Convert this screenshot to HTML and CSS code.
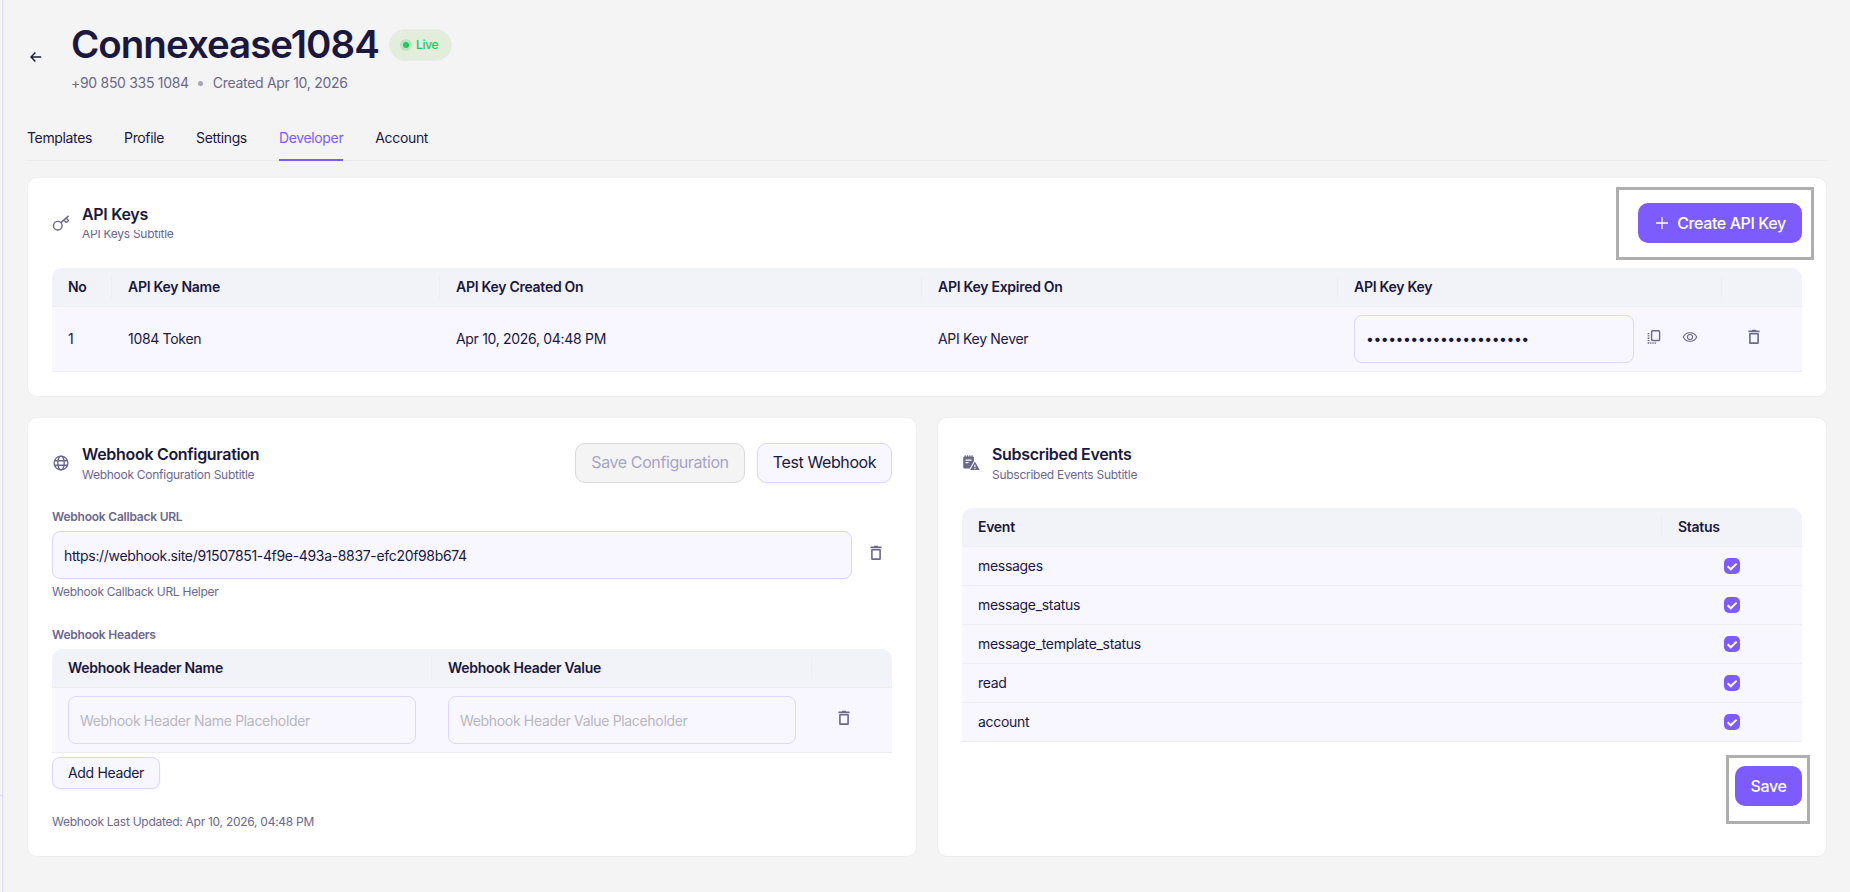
FILE: index.html
```html
<!DOCTYPE html>
<html lang="en">
<head>
    <meta charset="UTF-8">
    <meta name="viewport" content="width=device-width, initial-scale=1.0">
    <title>Connexease1084 - Developer</title>
    <link rel="stylesheet" href="styles.css">
</head>
<body>
    <svg class="sprite" aria-hidden="true">
        <symbol id="trash" viewBox="0 0 16 16">
            <path d="M2.5 2.4h11M6 1.5h4" stroke-width="1.6"/>
            <path d="M3.9 4.8h8.2v9.3H3.9z" stroke-width="1.6" stroke-linejoin="round"/>
        </symbol>
        <symbol id="check" viewBox="0 0 16 16">
            <path d="M3.6 8.2l3.2 3.1 5.8-5.7" stroke-width="2"/>
        </symbol>
    </svg>

    <aside class="sidebar"></aside>
    <main class="page">
        <header class="header">
            <a class="back" href="#" aria-label="Back">
                <svg width="12" height="12" viewBox="0 0 12 12"><path d="M11.2 6H1.2M5.4 1.4L1 6l4.4 4.6" stroke-width="1.4"/></svg>
            </a>
            <div>
                <div class="title-row">
                    <h1>Connexease1084</h1>
                    <span class="badge"><i class="badge-dot"></i>Live</span>
                </div>
                <div class="meta">
                    <span>+90 850 335 1084</span>
                    <i class="meta-dot"></i>
                    <span>Created Apr 10, 2026</span>
                </div>
            </div>
        </header>

        <nav class="tabs">
            <a href="#">Templates</a>
            <a href="#">Profile</a>
            <a href="#">Settings</a>
            <a href="#" class="active">Developer</a>
            <a href="#">Account</a>
        </nav>

        <div class="cards">
            <section class="card card-wide">
                <div class="card-head">
                    <svg class="card-icon" viewBox="0 0 18 18">
                        <circle cx="5.8" cy="11.7" r="4.3" stroke-width="1.4"/>
                        <path d="M8.9 8.6L16.6 1.9M12 6.1l1.9 2.1q2.2-.3 2.6-1.6l-2-2.4" stroke-width="1.4"/>
                    </svg>
                    <div class="card-title">
                        <h2>API Keys</h2>
                        <p class="cut">API Keys Subtitle</p>
                    </div>
                    <button class="btn primary marked marked-create">
                        <svg width="14" height="14" viewBox="0 0 14 14"><path d="M7 1v12M1 7h12" stroke-width="1.3"/></svg>
                        Create API Key
                    </button>
                </div>
                <table class="table">
                    <colgroup><col class="c-no"><col class="c-name"><col class="c-created"><col class="c-expired"><col class="c-key"><col class="c-action"></colgroup>
                    <thead>
                        <tr><th>No</th><th>API Key Name</th><th>API Key Created On</th><th>API Key Expired On</th><th>API Key Key</th><th></th></tr>
                    </thead>
                    <tbody>
                        <tr class="tall">
                            <td>1</td>
                            <td>1084 Token</td>
                            <td>Apr 10, 2026, 04:48 PM</td>
                            <td>API Key Never</td>
                            <td>
                                <div class="key-cell">
                                    <input class="input secret" type="text" value="••••••••••••••••••••••" readonly>
                                    <button class="icon-btn" aria-label="Copy">
                                        <svg width="16" height="16" viewBox="0 0 16 16"><rect x="5.6" y="1.7" width="8" height="9.8" rx="1" stroke-width="1.4"/><path d="M2.5 4v10H11" stroke-width="1.7" stroke-dasharray="1.3 1"/></svg>
                                    </button>
                                    <button class="icon-btn" aria-label="Show">
                                        <svg width="16" height="16" viewBox="0 0 16 16"><path d="M1.3 8C2.7 4.9 5.1 3.7 8 3.7S13.3 4.9 14.7 8C13.3 11.1 10.9 12.3 8 12.3S2.7 11.1 1.3 8z" stroke-width="1.1"/><circle cx="8" cy="8" r="2.5" stroke-width="1.1"/></svg>
                                    </button>
                                </div>
                            </td>
                            <td><button class="icon-btn" aria-label="Delete"><svg width="16" height="16"><use href="#trash"/></svg></button></td>
                        </tr>
                    </tbody>
                </table>
            </section>

            <section class="card">
                <div class="card-head">
                    <svg class="card-icon" viewBox="0 0 18 18">
                        <circle cx="9" cy="9" r="6.9" stroke-width="1.4"/>
                        <ellipse cx="9" cy="9" rx="3.2" ry="6.9" stroke-width="1.4"/>
                        <path d="M2.6 6.7h12.8M2.6 11.3h12.8" stroke-width="1.4"/>
                    </svg>
                    <div class="card-title">
                        <h2>Webhook Configuration</h2>
                        <p>Webhook Configuration Subtitle</p>
                    </div>
                    <button class="btn disabled" disabled>Save Configuration</button>
                    <button class="btn light">Test Webhook</button>
                </div>

                <label class="label" for="callback">Webhook Callback URL</label>
                <div class="callback">
                    <input class="input" id="callback" type="text" value="https://webhook.site/91507851-4f9e-493a-8837-efc20f98b674">
                    <button class="icon-btn" aria-label="Delete"><svg width="16" height="16"><use href="#trash"/></svg></button>
                </div>
                <p class="helper">Webhook Callback URL Helper</p>

                <div class="label label-headers">Webhook Headers</div>
                <table class="table">
                    <colgroup><col class="c-header"><col class="c-header"><col class="c-action"></colgroup>
                    <thead>
                        <tr><th>Webhook Header Name</th><th>Webhook Header Value</th><th></th></tr>
                    </thead>
                    <tbody>
                        <tr class="tall">
                            <td><input class="input" type="text" placeholder="Webhook Header Name Placeholder"></td>
                            <td><input class="input" type="text" placeholder="Webhook Header Value Placeholder"></td>
                            <td><button class="icon-btn" aria-label="Delete"><svg width="16" height="16"><use href="#trash"/></svg></button></td>
                        </tr>
                    </tbody>
                </table>
                <button class="btn light small">Add Header</button>
                <p class="updated">Webhook Last Updated: Apr 10, 2026, 04:48 PM</p>
            </section>

            <section class="card">
                <div class="card-head">
                    <svg class="card-icon solid" viewBox="0 0 18 18">
                        <path d="M2.7 2.5h8a1.2 1.2 0 0 1 1.2 1.200v6L8 14.500H2.700a1.500 1.500 0 0 1-1.500-1.500V4a1.500 1.500 0 0 1 1.500-1.500z"/>
                        <path d="M3.2 1.2v2M5.5 1.2v2M7.8 1.2v2M10.1 1.2v2" class="pins"/>
                        <path d="M3.5 6.2h6M3.5 8.7h3" class="cut-line"/>
                        <path d="M12.9 7.6l4.8 8.5H8.1z" class="warn"/>
                        <path d="M12.9 10.8v2.2M12.9 13.8v1.1" class="cut-line"/>
                    </svg>
                    <div class="card-title">
                        <h2>Subscribed Events</h2>
                        <p>Subscribed Events Subtitle</p>
                    </div>
                </div>
                <table class="table">
                    <colgroup><col><col class="c-status"></colgroup>
                    <thead>
                        <tr><th>Event</th><th>Status</th></tr>
                    </thead>
                    <tbody>
                        <tr><td>messages</td><td><span class="checkbox"><svg width="16" height="16"><use href="#check"/></svg></span></td></tr>
                        <tr><td>message_status</td><td><span class="checkbox"><svg width="16" height="16"><use href="#check"/></svg></span></td></tr>
                        <tr><td>message_template_status</td><td><span class="checkbox"><svg width="16" height="16"><use href="#check"/></svg></span></td></tr>
                        <tr><td>read</td><td><span class="checkbox"><svg width="16" height="16"><use href="#check"/></svg></span></td></tr>
                        <tr><td>account</td><td><span class="checkbox"><svg width="16" height="16"><use href="#check"/></svg></span></td></tr>
                    </tbody>
                </table>
                <div class="card-foot">
                    <button class="btn primary marked marked-save">Save</button>
                </div>
            </section>
        </div>
    </main>
</body>
</html>
```
FILE: styles.css
```css
* {
    box-sizing: border-box;
}
body {
    display: flex;
    margin: 0;
    height: 892px;
    overflow: hidden;
    background-color: #f4f4f4;
    color: #1a183f;
    font-family: Inter, "Liberation Sans", sans-serif;
    font-size: 14px;
    line-height: 20px;
    letter-spacing: -0.31px;
}
h1, h2, p {
    margin: 0;
}
button, input {
    font-family: inherit;
    letter-spacing: inherit;
    color: inherit;
}
svg {
    display: block;
    fill: none;
    stroke: currentColor;
}
.sprite {
    position: absolute;
    width: 0;
    height: 0;
}

/* edge of the side menu */
.sidebar {
    width: 3px;
    padding-top: 795px;
    border-right: 1px solid #ddd6fe;
}
.sidebar::before {
    content: "";
    display: block;
    height: 1px;
    background-color: #ddd6fe;
}
.page {
    flex: 1;
    padding: 21px 23px 0 24px;
}

/* header */
.header {
    display: flex;
    align-items: center;
}
.back {
    width: 44px;
    padding-left: 3px;
    color: inherit;
}
.title-row {
    display: flex;
    align-items: center;
    height: 48px;
    margin-bottom: 4px;
}
h1 {
    width: 318px;
    font-size: 38.5px;
    font-weight: 600;
    line-height: 48px;
    letter-spacing: -1px;
    margin-top: -3px;
}
.badge {
    display: flex;
    align-items: center;
    gap: 8px;
    width: 63px;
    height: 32px;
    padding-left: 12px;
    border: 1px solid #ebebeb;
    border-radius: 16px;
    background-color: #e2eddc;
    color: #22c55e;
    font-size: 12px;
    font-weight: 500;
}
.badge-dot {
    width: 6px;
    height: 6px;
    border-radius: 50%;
    background-color: #22c55e;
    box-shadow: 0 0 0 3px rgba(34, 197, 94, 0.2);
    margin: 0 -1px 0 1px;
}
.meta {
    display: flex;
    align-items: center;
    gap: 9.5px;
    letter-spacing: -0.3px;
    color: #6b688c;
}
.meta-dot {
    width: 5px;
    height: 5px;
    border-radius: 50%;
    background-color: #a5a3b9;
}

/* tabs */
.tabs {
    display: flex;
    gap: 32px;
    margin-top: 35px;
    height: 33px;
    background: linear-gradient(#ececec, #ececec) bottom / 100% 1px no-repeat;
}
.tabs a {
    color: inherit;
    text-decoration: none;
    letter-spacing: -0.35px;
}
.tabs .active {
    color: #7c5cff;
    border-bottom: 2px solid #7c5cff;
}

/* cards */
.cards {
    display: grid;
    grid-template-columns: 1fr 1fr;
    gap: 20px;
    margin-top: 16px;
}
.card {
    height: 440px;
    padding: 24px;
    border: 1px solid #eeeeee;
    border-radius: 10px;
    background-color: #fff;
}
.card-wide {
    grid-column: span 2;
    height: 220px;
}
.card-head {
    display: flex;
    align-items: center;
    gap: 12px;
    height: 42px;
    margin-bottom: 24px;
}
.card-icon {
    width: 18px;
    height: 18px;
    color: #6b688c;
}
.card-icon.solid {
    fill: currentColor;
    stroke: none;
}
.card-icon .pins {
    stroke: currentColor;
    stroke-width: 1.2;
}
.card-icon .cut-line {
    stroke: #fff;
    stroke-width: 1.2;
}
.card-icon .warn {
    stroke: #fff;
    stroke-width: 2;
    paint-order: stroke;
}
.card-title {
    flex: 1;
}
.card-title h2 {
    font-size: 16px;
    font-weight: 600;
    line-height: 24px;
}
.card-title p, .helper, .updated {
    font-size: 12px;
    line-height: 18px;
    letter-spacing: -0.27px;
    color: #6b688c;
}
.card-title .cut {
    margin: -1px 0 1px;
    clip-path: inset(5px 0 0 0);
}

/* buttons */
.btn {
    display: flex;
    align-items: center;
    justify-content: center;
    height: 40px;
    padding: 0 15px;
    border: 1px solid transparent;
    border-radius: 10px;
    font-size: 16px;
    font-weight: 400;
    letter-spacing: -0.4px;
    white-space: nowrap;
}
.primary {
    background-color: #7c5cff;
    color: #fff;
    font-weight: 500;
}
.primary svg {
    margin-right: 8px;
    margin-left: 1px;
}
.light {
    width: 135px;
    padding-bottom: 2px;
    border-color: #ddd6fe;
    background-color: #f8f6ff;
    box-shadow: 0 1px 2px rgba(124, 92, 255, 0.08);
}
.disabled {
    width: 170px;
    padding-bottom: 2px;
    border-color: #d9d9d9;
    background-color: #f4f4f4;
    color: #a8a4c6;
}
.small {
    width: 108px;
    height: 32px;
    margin-top: 4px;
    border-radius: 8px;
    font-size: 14px;
    letter-spacing: -0.32px;
}
.icon-btn {
    display: flex;
    align-items: center;
    justify-content: center;
    flex-shrink: 0;
    width: 32px;
    height: 32px;
    margin-bottom: 4px;
    padding: 0;
    border: none;
    background: none;
    color: #6b688c;
}

/* grey frame round a highlighted button */
.marked {
    position: relative;
}
.marked::after {
    content: "";
    position: absolute;
    border: 3px solid #aeaeae;
}
.marked-create {
    width: 164px;
}
.marked-create::after {
    inset: -17px -13px -18px -23px;
}
.marked-save {
    width: 67px;
}
.marked-save::after {
    inset: -12px -9px -19px -10px;
}

/* tables */
.table {
    width: 100%;
    table-layout: fixed;
    border-spacing: 0;
}
.table th {
    position: relative;
    height: 39px;
    padding: 0 16px;
    border-bottom: 1px solid #eeeeee;
    background-color: #f2f3f9;
    font-weight: 600;
    text-align: left;
    letter-spacing: -0.28px;
}
.table th:first-child {
    border-top-left-radius: 10px;
}
.table th:last-child {
    border-top-right-radius: 10px;
}
.table th:not(:last-child)::after {
    content: "";
    position: absolute;
    top: 8px;
    right: 0;
    width: 1px;
    height: 22px;
    background-color: #ededf2;
}
.table td {
    height: 39px;
    padding: 0 16px;
    border-bottom: 1px solid #eeeeee;
    background-color: #f8f6ff;
}
.table .tall td {
    height: 65px;
}
.c-no { width: 60px; }
.c-name { width: 328px; }
.c-created { width: 482px; }
.c-expired { width: 416px; }
.c-key { width: 384px; }
.c-action { width: 80px; }
.c-header { width: 380px; }
.c-status { width: 140px; }
.key-cell {
    display: flex;
    align-items: center;
    gap: 4px;
}
.key-cell .input {
    width: 280px;
}
.checkbox {
    display: block;
    width: 16px;
    height: 16px;
    margin: 0 auto;
    border-radius: 5px;
    background-color: #7c5cff;
    color: #fff;
}

/* form */
.label {
    display: block;
    margin-bottom: 5px;
    font-size: 12px;
    font-weight: 600;
    line-height: 18px;
    letter-spacing: -0.22px;
    color: #6b688c;
}
.label-headers {
    margin-top: 25px;
}
.callback {
    display: flex;
    align-items: center;
    gap: 8px;
}
.input {
    display: block;
    width: 100%;
    height: 48px;
    padding: 0 11px;
    border: 1px solid #ddd6fe;
    border-radius: 8px;
    background-color: #f8f6ff;
    font-size: 14px;
    letter-spacing: -0.33px;
}
.input::placeholder {
    color: #b9b8c0;
}
.secret {
    padding-bottom: 2px;
    letter-spacing: -0.48px;
}
.helper {
    margin-top: 4px;
}
.updated {
    margin-top: 24px;
}
.card-foot {
    display: flex;
    justify-content: flex-end;
    margin-top: 24px;
}
```
